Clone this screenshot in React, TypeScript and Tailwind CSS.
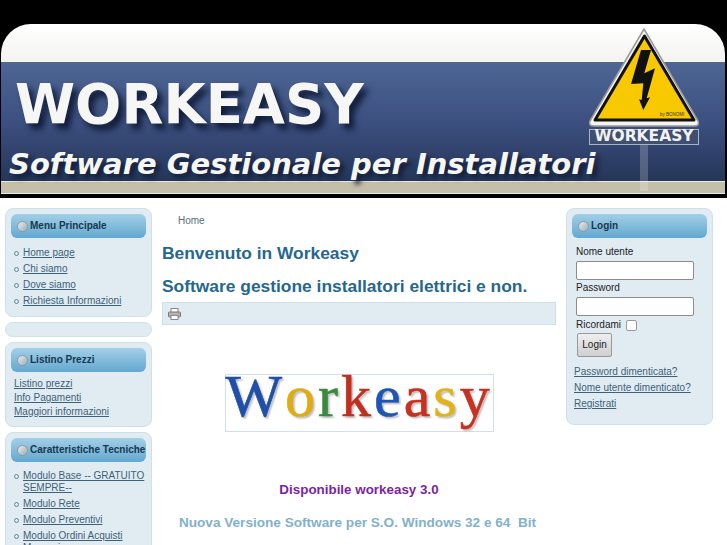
const font = "font-['Liberation_Sans',Arial,sans-serif]";

function ModuleHead({ title }: { title: string }) {
  return (
    <div className="flex h-[24px] items-center rounded-md bg-gradient-to-b from-[#a3cfe6] to-[#62a8d0] pb-[2px] pl-[6px] text-[10px] font-bold whitespace-nowrap text-[#17384f]">
      <span className="mt-[2px] mr-[2px] h-[11px] w-[11px] shrink-0 rounded-full border border-[#8a9aa3] bg-gradient-to-br from-[#e6eaec] to-[#9fb0ba]" />
      {title}
    </div>
  );
}

function Box({ children, className = "" }: { children?: React.ReactNode; className?: string }) {
  return (
    <div className={`rounded-lg border border-[#cfe0e8] bg-[#e1ecf2] ${className}`}>{children}</div>
  );
}

function BulletList({ items }: { items: string[] }) {
  return (
    <ul className="flex flex-col">
      {items.map((item) => (
        <li key={item} className="flex py-[2px] text-[10px] leading-[12px] text-[#3d6178] underline">
          <span className="mt-[4px] mr-[4px] ml-[3px] h-[5px] w-[5px] shrink-0 rounded-full border border-[#5b87a3]" />
          <span>{item}</span>
        </li>
      ))}
    </ul>
  );
}

function WarningSign() {
  return (
    <div className="absolute top-[3px] left-[587px] w-[112px]">
      <svg width="112" height="102" viewBox="0 0 112 102" className="block">
        <path d="M56 2 L2 94 Q0 99 6 99 L106 99 Q112 99 110 94 Z" fill="#f4f4f4" stroke="#9a9a9a" strokeWidth="1.5" strokeLinejoin="round" />
        <path d="M56.5 9 L7 93 L106 93 Z" fill="#f8c800" stroke="#111" strokeWidth="3" strokeLinejoin="round" />
        <path d="M53 23 L63 23 L56.3 46.3 L67 41.3 L58.7 71.3 L62 70.3 L55.3 83 L51 72.3 L53.7 73 L55.3 56.3 L43 57 Z" fill="#111" />
        <text x="72" y="89" fontSize="4.5" fill="#333" fontFamily="Liberation Sans">by BONOMI</text>
      </svg>
      <div className="ml-[1px] flex h-[16px] w-[110px] items-center justify-center border border-[#a9b4c4] bg-[#3f4f72] font-['DejaVu_Sans',sans-serif] text-[15.5px] font-bold text-[#f2f2f2]">
        WORKEASY
      </div>
    </div>
  );
}

function Banner() {
  return (
    <div className="h-[198px] bg-black pt-[24px] pl-[1px]">
      <div className="relative h-[170px] w-[724px] overflow-hidden rounded-t-[30px] font-['DejaVu_Sans',sans-serif]">
        <div className="h-[38px] bg-gradient-to-b from-white to-[#f3f4f0]" />
        <div className="h-[119px] border-t border-[#55657a] bg-gradient-to-b from-[#4d6694] via-[#3c5080] to-[#263659] pl-[14px]">
          <div className="mt-[2px] text-[54.5px] leading-[78px] font-bold text-[#f6f6f4] [text-shadow:5px_6px_6px_#111c38]">
            WORKEASY
          </div>
          <div className="-ml-[6px] pt-[2px] text-[29px] leading-[38px] font-bold whitespace-nowrap text-[#f6f6f4] italic [text-shadow:4px_4px_5px_#111c38]">
            Software Gestionale per Installatori
          </div>
        </div>
        <div className="h-[13px] border-y border-[#e9e9e4] bg-[#c4bfa8]" />
        <WarningSign />
        <div className="absolute top-[121px] left-[639px] h-[46px] w-[8px] bg-white/20" />
      </div>
    </div>
  );
}

function WorkeasyLogo() {
  const letters: [string, string][] = [
    ["W", "#1f4fa8"],
    ["o", "#e0ac12"],
    ["r", "#3a8a3e"],
    ["k", "#c0301f"],
    ["e", "#1f55b5"],
    ["a", "#c8301f"],
    ["s", "#e3b21a"],
    ["y", "#c8301f"],
  ];
  return (
    <div className="mx-auto mt-[49px] flex h-[58px] w-[269px] items-start justify-center border border-[#cfe0e8] font-['Liberation_Serif',serif] text-[60px] leading-[42px] tracking-[3px] [-webkit-text-stroke:0.6px] [text-shadow:2px_2px_2px_#bbb]">
      {letters.map(([ch, color], i) => (
        <span key={i} style={{ color }}>
          {ch}
        </span>
      ))}
    </div>
  );
}

export default function App() {
  return (
    <div className={`h-[545px] overflow-hidden bg-white ${font}`}>
      <Banner />
      <div className="flex items-start pt-[10px] pl-[5px]">
        {/* left column */}
        <div className="flex w-[147px] shrink-0 flex-col gap-[5px]">
          <Box className="h-[109px] px-[5px] pt-[5px]">
            <ModuleHead title="Menu Principale" />
            <div className="mt-[7px]">
              <BulletList items={["Home page", "Chi siamo", "Dove siamo", "Richiesta Informazioni"]} />
            </div>
          </Box>
          <Box className="h-[15px]" />
          <Box className="h-[85px] px-[5px] pt-[5px]">
            <ModuleHead title="Listino Prezzi" />
            <div className="mt-[5px] flex flex-col pl-[3px] text-[10px] leading-[14px] text-[#3d6178] underline">
              <span>Listino prezzi</span>
              <span>Info Pagamenti</span>
              <span>Maggiori informazioni</span>
            </div>
          </Box>
          <Box className="h-[130px] px-[5px] pt-[5px]">
            <ModuleHead title="Caratteristiche Tecniche" />
            <div className="mt-[6px]">
              <BulletList items={["Modulo Base -- GRATUITO SEMPRE--", "Modulo Rete", "Modulo Preventivi", "Modulo Ordini Acquisti Magazzino"]} />
            </div>
          </Box>
        </div>

        {/* center column */}
        <div className="ml-[10px] w-[394px] shrink-0">
          <div className="pt-[6px] pl-[16px] text-[10px] leading-[14px] text-[#5b6b78]">Home</div>
          <h2 className="mt-[14px] text-[17.4px] leading-[22px] font-bold text-[#25678f]">Benvenuto in Workeasy</h2>
          <h2 className="mt-[11px] text-[17.4px] leading-[22px] font-bold text-[#25678f]">Software gestione installatori elettrici e non.</h2>
          <div className="mt-[5px] flex h-[23px] items-center border border-[#cfe0e8] bg-[#e1ecf2] pl-[5px]">
            <svg width="13" height="12" viewBox="0 0 13 12">
              <rect x="3" y="0.5" width="7" height="4" fill="#fff" stroke="#888" />
              <rect x="0.5" y="4" width="12" height="5" rx="1" fill="#b5b5b5" stroke="#777" />
              <rect x="3" y="7.5" width="7" height="4" fill="#fff" stroke="#888" />
              <rect x="9.5" y="5" width="2" height="1" fill="#e0a030" />
            </svg>
          </div>
          <WorkeasyLogo />
          <p className="mt-[50px] text-center text-[13.4px] leading-[16px] font-bold text-[#7d1fa3]">Disponibile workeasy 3.0</p>
          <p className="mt-[17px] pr-[3px] text-center text-[13.6px] leading-[16px] font-bold text-[#82b1cc]">Nuova Versione Software per S.O. Windows 32 e 64&nbsp; Bit</p>
        </div>

        {/* right column */}
        <Box className="ml-[10px] h-[217px] w-[147px] shrink-0 px-[5px] pt-[5px]">
          <ModuleHead title="Login" />
          <form className="pt-[8px] pl-[4px] text-[10px] leading-[12px] text-[#222]">
            <label className="block">Nome utente</label>
            <input className="mt-[3px] block h-[19px] w-[118px] rounded-[2px] border border-[#8c8c8c] bg-white" />
            <label className="mt-[1px] block pt-[1px]">Password</label>
            <input type="password" className="mt-[3px] block h-[19px] w-[118px] rounded-[2px] border border-[#8c8c8c] bg-white" />
            <div className="mt-[3px] flex items-center">
              Ricordami
              <span className="ml-[5px] h-[11px] w-[11px] rounded-[2px] border border-[#9a9a9a] bg-white" />
            </div>
            <button type="button" className="mt-[2px] ml-[1px] block h-[24px] w-[35px] rounded-[2px] border border-[#999] bg-gradient-to-b from-[#efefef] to-[#cfcfcf] text-[10px] text-[#222]">
              Login
            </button>
          </form>
          <div className="mt-[9px] -ml-[3px] flex flex-col gap-[4px] pl-[5px] text-[10px] leading-[12px] whitespace-nowrap text-[#3d6178] underline">
            <span>Password dimenticata?</span>
            <span>Nome utente dimenticato?</span>
            <span>Registrati</span>
          </div>
        </Box>
      </div>
    </div>
  );
}
